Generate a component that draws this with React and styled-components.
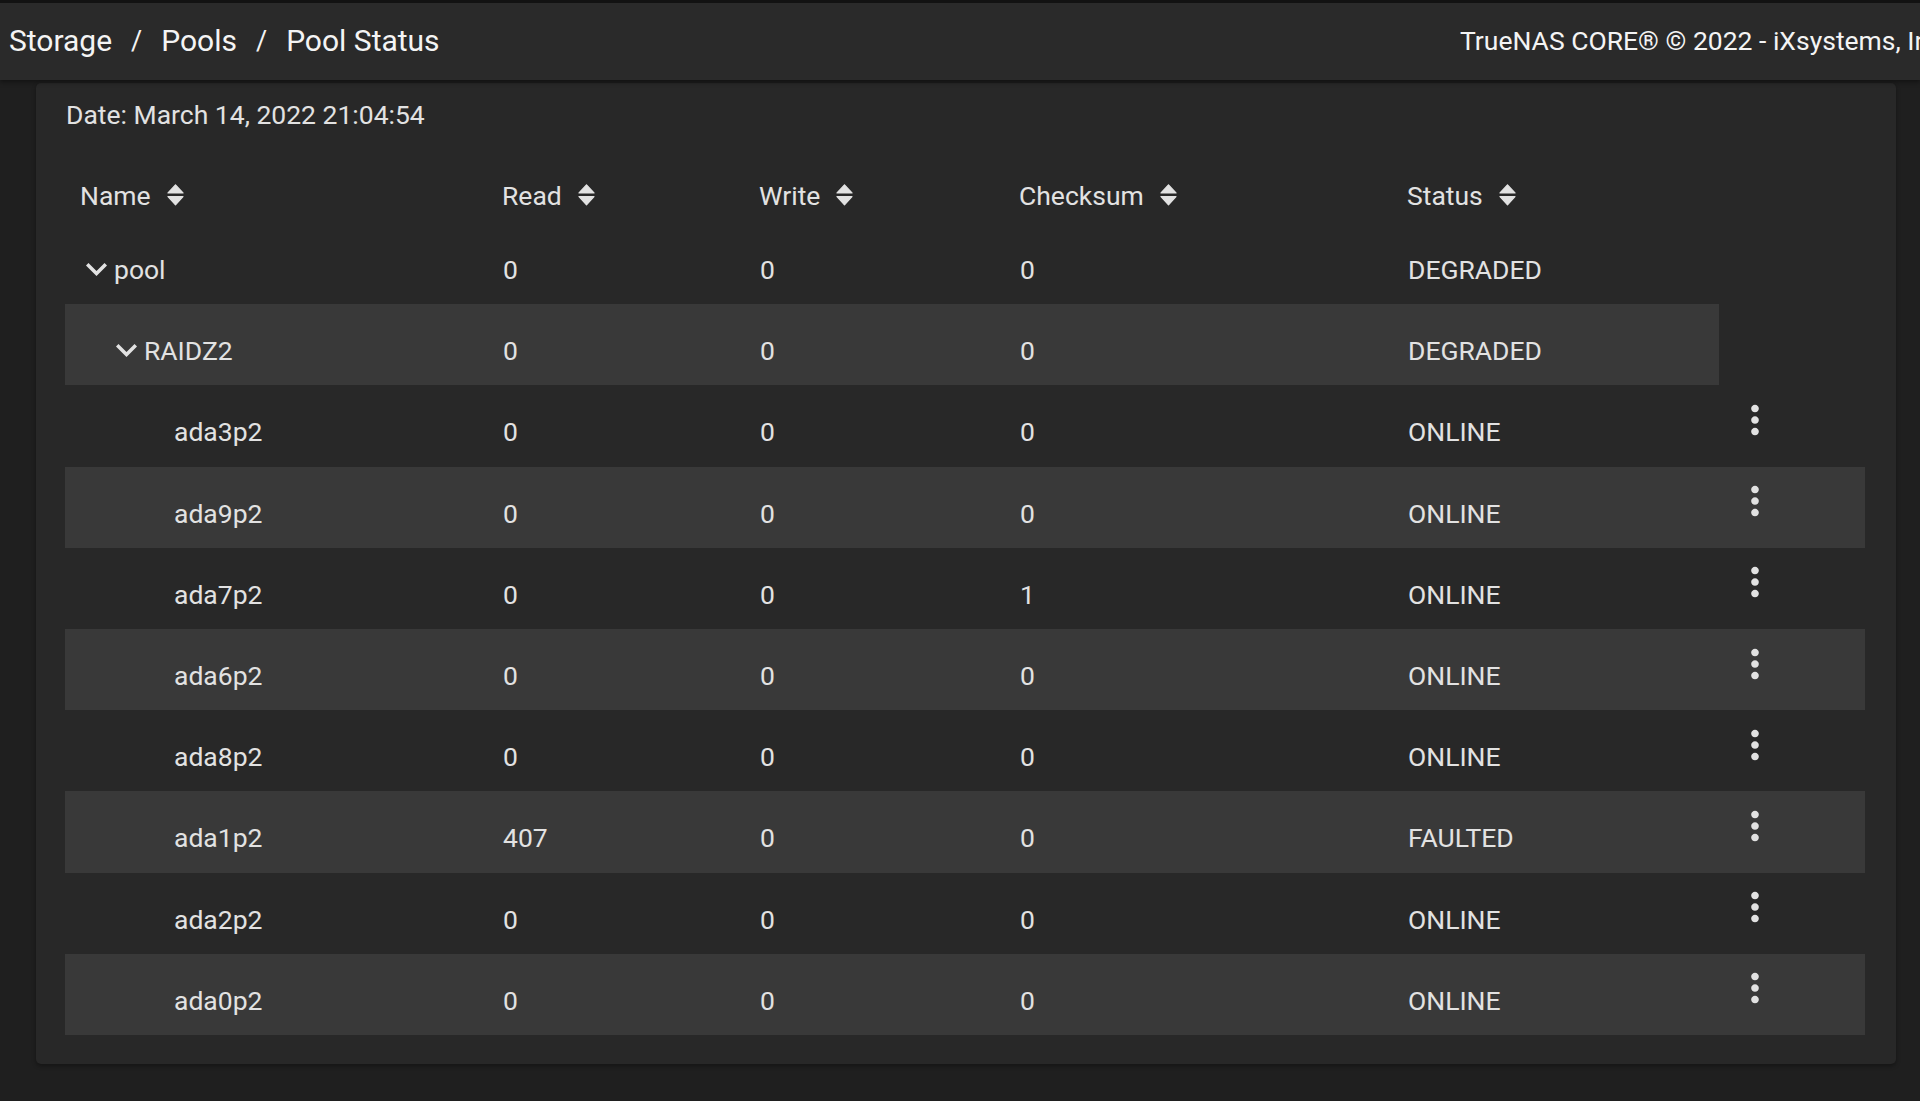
import React from 'react';
import styled, { createGlobalStyle, css } from 'styled-components';

const GlobalStyle = createGlobalStyle`
  html, body {
    margin: 0;
    padding: 0;
    background: #1f1f1f;
    font-family: Roboto, "Liberation Sans", sans-serif;
  }
`;

const disks = [
  { name: 'ada3p2', read: 0, write: 0, checksum: 0, status: 'ONLINE' },
  { name: 'ada9p2', read: 0, write: 0, checksum: 0, status: 'ONLINE' },
  { name: 'ada7p2', read: 0, write: 0, checksum: 1, status: 'ONLINE' },
  { name: 'ada6p2', read: 0, write: 0, checksum: 0, status: 'ONLINE' },
  { name: 'ada8p2', read: 0, write: 0, checksum: 0, status: 'ONLINE' },
  { name: 'ada1p2', read: 407, write: 0, checksum: 0, status: 'FAULTED' },
  { name: 'ada2p2', read: 0, write: 0, checksum: 0, status: 'ONLINE' },
  { name: 'ada0p2', read: 0, write: 0, checksum: 0, status: 'ONLINE' },
];

const rows = [
  { name: 'pool', level: 0, expandable: true, read: 0, write: 0, checksum: 0, status: 'DEGRADED' },
  { name: 'RAIDZ2', level: 1, expandable: true, read: 0, write: 0, checksum: 0, status: 'DEGRADED' },
  ...disks.map(d => ({ ...d, level: 2, actions: true })),
];

const columns = ['Name', 'Read', 'Write', 'Checksum', 'Status'];

const Page = styled.div`
  height: 100vh;
  display: flex;
  flex-direction: column;
  overflow: hidden;
`;

const TopBar = styled.header`
  height: 77px;
  flex-shrink: 0;
  border-top: 3px solid #121212;
  background: #2a2a2a;
  box-shadow: 0 2px 5px rgba(0, 0, 0, 0.45);
  display: flex;
  align-items: center;
  justify-content: space-between;
  padding-left: 9px;
  position: relative;
  z-index: 1;
  overflow: hidden;
`;

const Crumbs = styled.nav`
  display: flex;
  align-items: center;
  font-size: 30px;
  color: #f4f4f4;
  white-space: nowrap;
  margin-top: -2px;
`;

const Sep = styled.span`
  margin: 0 19px;
  font-size: 27px;
`;

const Copyright = styled.div`
  width: 460px;
  flex-shrink: 0;
  font-size: 26.5px;
  color: #f4f4f4;
  white-space: nowrap;
  overflow: hidden;
  margin-top: -2px;
`;

const Content = styled.main`
  flex: 1;
  padding: 3px 24px 35px 36px;
  display: flex;
  flex-direction: column;
`;

const Card = styled.section`
  background: #282828;
  border-radius: 5px;
  box-shadow: 0 2px 4px rgba(0, 0, 0, 0.35);
  padding: 17px 31px 29px 29px;
  color: #e2e2e2;
`;

const DateLine = styled.div`
  font-size: 26.5px;
  line-height: 30px;
  padding-left: 1px;
  margin-bottom: 37px;
`;

const Row = styled.div`
  display: grid;
  grid-template-columns: 422px 257px 260px 388px 327px 146px;
  height: ${p => (p.$head ? '56px' : '81.2px')};
  font-size: 26.5px;
  ${p => p.$striped && css`
    & > div {
      background: #393939;
    }
  `}
`;

const Cell = styled.div`
  display: flex;
  align-items: center;
  padding: ${p => (p.$head ? '0 0 0 15px' : '12px 0 0 16px')};
  white-space: nowrap;
`;

const NameCell = styled(Cell)`
  padding-left: ${p => 16 + p.$level * 30}px;
`;

const Toggle = styled.span`
  width: 33px;
  flex-shrink: 0;
  display: flex;
  align-items: center;
  padding-left: 5px;
  box-sizing: border-box;
`;

const ActionCell = styled.div`
  display: flex;
  align-items: center;
  padding: 0 0 12px 13px;
`;

const SortIcon = styled.svg`
  margin-left: 16px;
  flex-shrink: 0;
`;

const Sort = () => (
  <SortIcon width="17" height="22" viewBox="0 0 17 22">
    <path d="M8.5 0.8 L16 9 L1 9 Z" fill="#e2e2e2" stroke="#e2e2e2" strokeWidth="1.2" strokeLinejoin="round" />
    <path d="M1 12.5 L16 12.5 L8.5 20.8 Z" fill="#e2e2e2" stroke="#e2e2e2" strokeWidth="1.2" strokeLinejoin="round" />
  </SortIcon>
);

const Chevron = () => (
  <svg width="21" height="13" viewBox="6 8.59 12 7.41" preserveAspectRatio="none">
    <path d="M16.59 8.59L12 13.17 7.41 8.59 6 10l6 6 6-6z" fill="#e2e2e2" />
  </svg>
);

const MoreVert = () => (
  <svg width="46" height="46" viewBox="0 0 24 24">
    <path
      d="M12 8c1.1 0 2-.9 2-2s-.9-2-2-2-2 .9-2 2 .9 2 2 2zm0 2c-1.1 0-2 .9-2 2s.9 2 2 2 2-.9 2-2-.9-2-2-2zm0 6c-1.1 0-2 .9-2 2s.9 2 2 2 2-.9 2-2-.9-2-2-2z"
      fill="#e2e2e2"
    />
  </svg>
);

export default function App() {
  return (
    <Page>
      <GlobalStyle />
      <TopBar>
        <Crumbs>
          <span>Storage</span>
          <Sep>/</Sep>
          <span>Pools</span>
          <Sep>/</Sep>
          <span>Pool Status</span>
        </Crumbs>
        <Copyright>TrueNAS CORE® © 2022 - iXsystems, Inc.</Copyright>
      </TopBar>
      <Content>
        <Card>
          <DateLine>Date: March 14, 2022 21:04:54</DateLine>
          <Row $head>
            {columns.map(c => (
              <Cell $head key={c}>
                {c}
                <Sort />
              </Cell>
            ))}
          </Row>
          {rows.map((r, i) => (
            <Row key={r.name} $striped={i % 2 === 1}>
              <NameCell $level={r.level}>
                <Toggle>{r.expandable && <Chevron />}</Toggle>
                {r.name}
              </NameCell>
              <Cell>{r.read}</Cell>
              <Cell>{r.write}</Cell>
              <Cell>{r.checksum}</Cell>
              <Cell>{r.status}</Cell>
              {r.actions && (
                <ActionCell>
                  <MoreVert />
                </ActionCell>
              )}
            </Row>
          ))}
        </Card>
      </Content>
    </Page>
  );
}
